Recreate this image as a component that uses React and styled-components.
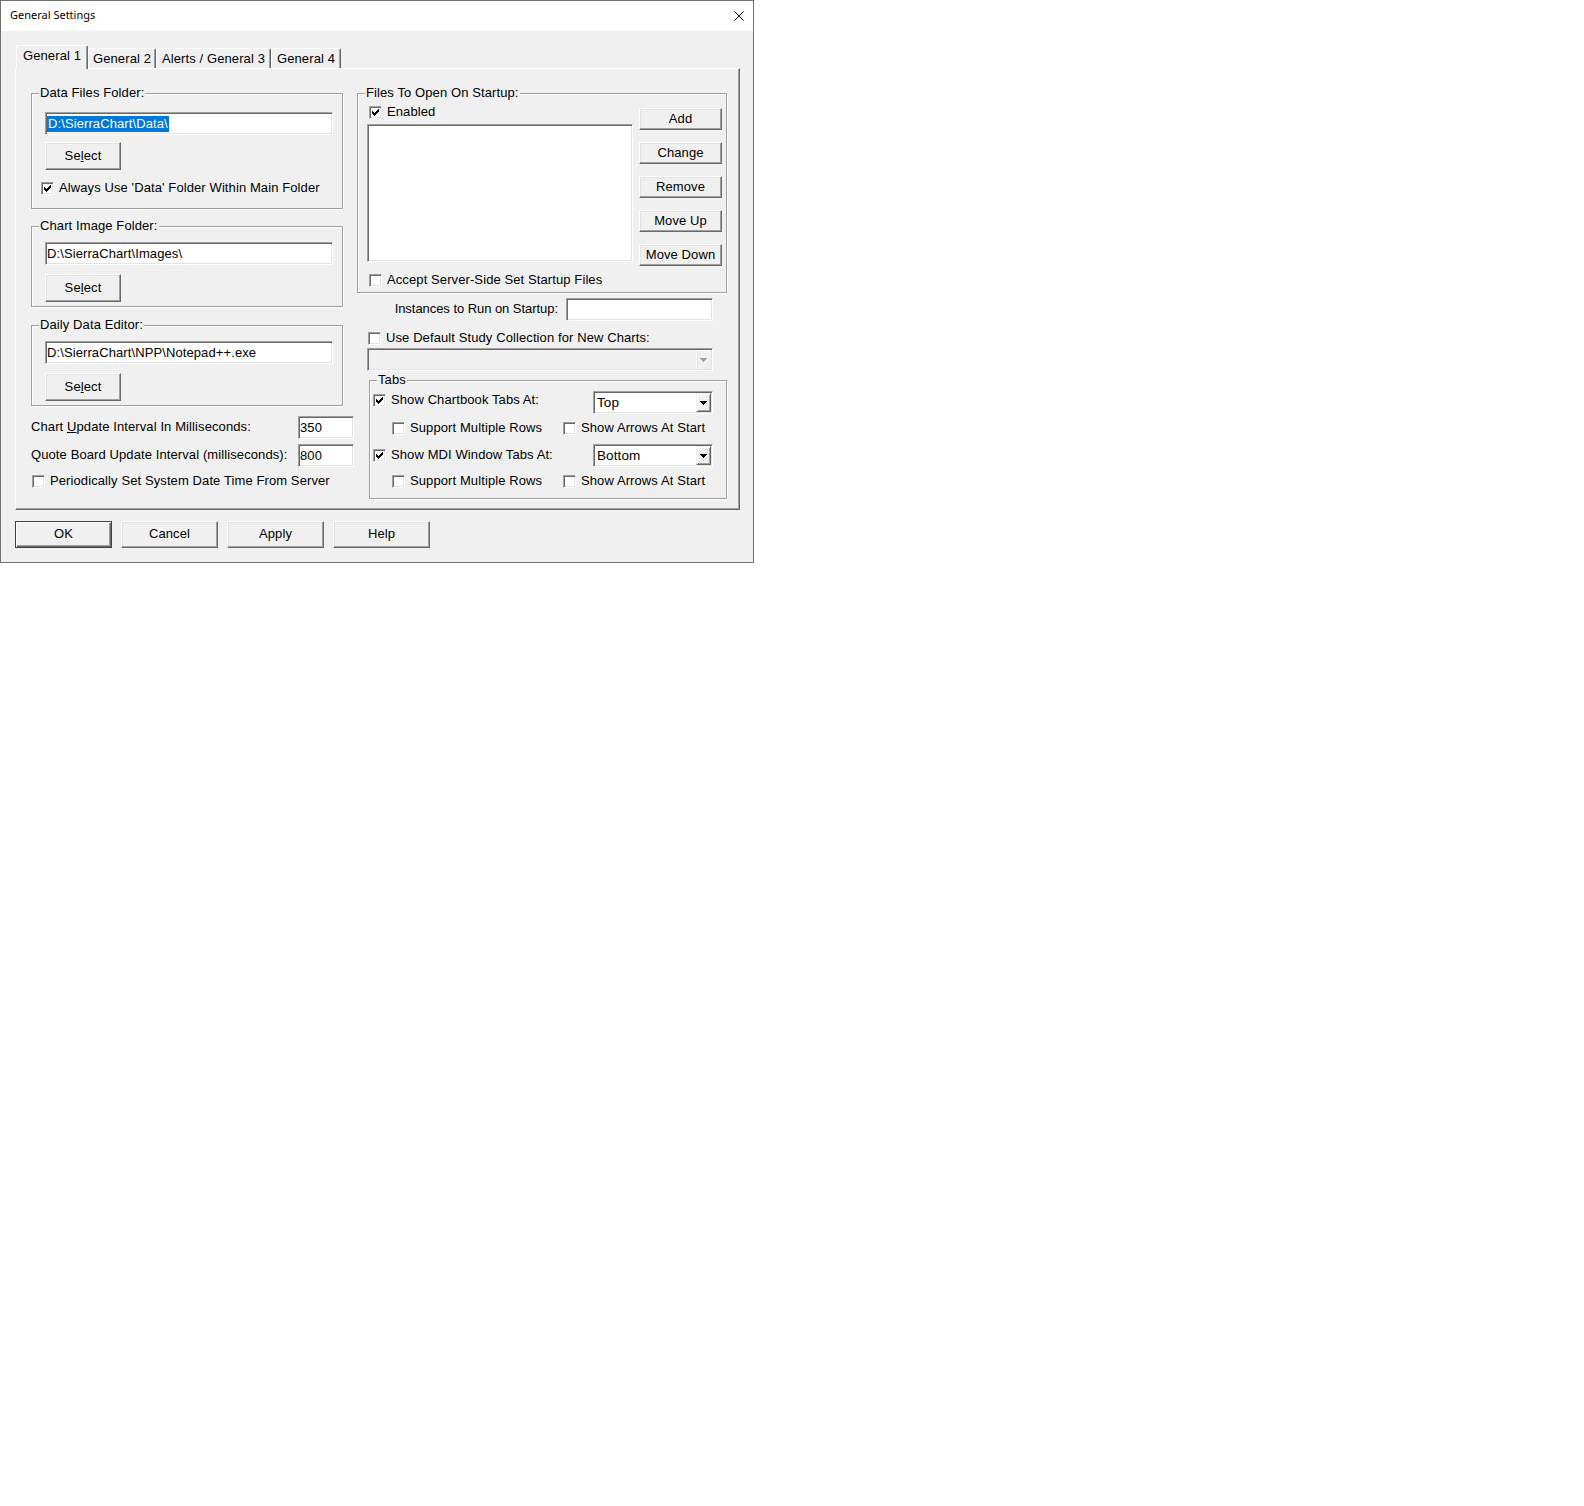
import React from 'react';
import styled, { createGlobalStyle } from 'styled-components';

const GlobalStyle = createGlobalStyle`
  html, body {
    margin: 0;
    padding: 0;
    background: #ffffff;
  }
  body {
    font-family: "Liberation Sans", Arial, sans-serif;
    font-size: 13px;
    letter-spacing: 0.1px;
    color: #000000;
  }
`;

const Window = styled.div`
  width: 754px;
  height: 563px;
  box-sizing: border-box;
  border: 1px solid #727272;
  background: #f0f0f0;
  display: flex;
  flex-direction: column;
`;

const TitleBar = styled.div`
  height: 30px;
  flex: none;
  box-sizing: border-box;
  background: #ffffff;
  display: flex;
  align-items: center;
  justify-content: space-between;
  padding: 0 9px 3px 9px;
  font-family: "Noto Sans", "Liberation Sans", sans-serif;
  font-size: 11px;
  letter-spacing: 0;
`;

const CloseButton = styled.span`
  display: flex;
  width: 10px;
  height: 10px;
  margin-top: 2px;
`;

const Body = styled.div`
  flex: 1;
  padding: 14px 13px 14px 14px;
  display: flex;
  flex-direction: column;
`;

const TabStrip = styled.div`
  height: 23px;
  display: flex;
  align-items: flex-end;
  padding-left: 1px;
`;

const Tab = styled.div`
  box-sizing: border-box;
  width: ${p => p.$w}px;
  height: ${p => (p.$active ? 24 : 20)}px;
  margin-bottom: ${p => (p.$active ? -1 : 0)}px;
  position: relative;
  z-index: ${p => (p.$active ? 2 : 1)};
  background: #f0f0f0;
  border-top: 1px solid #ffffff;
  border-left: 1px solid #ffffff;
  border-right: 1px solid #696969;
  box-shadow: inset -1px 0 0 #a0a0a0;
  border-radius: 2px 2px 0 0;
  display: flex;
  align-items: center;
  justify-content: center;
  padding-bottom: ${p => (p.$active ? 4 : 0)}px;
  white-space: nowrap;
`;

const Panel = styled.div`
  width: 725px;
  height: 442px;
  box-sizing: border-box;
  border-top: 1px solid #ffffff;
  border-left: 1px solid #ffffff;
  border-right: 1px solid #696969;
  border-bottom: 1px solid #696969;
  box-shadow: inset -1px -1px 0 #a0a0a0;
  padding: 24px 11px 0 15px;
  display: flex;
  gap: 14px;
`;

const Column = styled.div`
  width: ${p => p.$w}px;
  flex: none;
  display: flex;
  flex-direction: column;
`;

const GroupBox = styled.div`
  position: relative;
  box-sizing: border-box;
  width: ${p => (p.$w ? `${p.$w}px` : 'auto')};
  height: ${p => p.$h}px;
  margin-top: ${p => p.$mt || 0}px;
  margin-left: ${p => p.$ml || 0}px;
  padding: ${p => p.$pad};
  border: 1px solid #a0a0a0;
  box-shadow: 1px 1px 0 #ffffff, inset 1px 1px 0 #ffffff;
  display: flex;
  flex-direction: column;
  align-items: flex-start;
`;

const Caption = styled.span`
  position: absolute;
  top: -9px;
  left: 7px;
  padding: 0 1px;
  line-height: 15px;
  background: #f0f0f0;
  white-space: nowrap;
`;

const TextBox = styled.div`
  box-sizing: border-box;
  width: ${p => p.$w}px;
  height: 23px;
  flex: none;
  padding: 0 1px;
  background: #ffffff;
  border-top: 1px solid #a0a0a0;
  border-left: 1px solid #a0a0a0;
  border-bottom: 1px solid #ffffff;
  border-right: 1px solid #ffffff;
  box-shadow: inset 1px 1px 0 #696969, inset -1px -1px 0 #e3e3e3;
  display: flex;
  align-items: center;
  white-space: nowrap;
  overflow: hidden;
`;

const Selected = styled.span`
  background: #0078d7;
  color: #ffffff;
  line-height: 16px;
  padding: 0 1px;
`;

const ListBox = styled.div`
  box-sizing: border-box;
  width: ${p => p.$w}px;
  height: ${p => p.$h}px;
  margin-top: ${p => p.$mt || 0}px;
  background: #ffffff;
  border-top: 1px solid #a0a0a0;
  border-left: 1px solid #a0a0a0;
  border-bottom: 1px solid #ffffff;
  border-right: 1px solid #ffffff;
  box-shadow: inset 1px 1px 0 #696969, inset -1px -1px 0 #e3e3e3;
`;

const Button = styled.button`
  box-sizing: border-box;
  width: ${p => p.$w}px;
  height: ${p => p.$h}px;
  flex: none;
  margin: ${p => p.$mt || 0}px 0 0 0;
  padding: 0 0 2px 0;
  background: #f0f0f0;
  font: inherit;
  letter-spacing: inherit;
  color: #000000;
  border: 1px solid;
  border-color: ${p => (p.$default ? '#404040' : '#ffffff #696969 #696969 #ffffff')};
  box-shadow: ${p =>
    p.$default
      ? 'inset 1px 1px 0 #ffffff, inset -1px -1px 0 #696969, inset -2px -2px 0 #a0a0a0'
      : 'inset -1px -1px 0 #a0a0a0, inset 1px 1px 0 #e3e3e3'};
  display: flex;
  align-items: center;
  justify-content: center;
`;

const CheckRow = styled.label`
  display: flex;
  align-items: center;
  gap: 5px;
  height: 13px;
  flex: none;
  align-self: ${p => p.$align || 'auto'};
  margin-top: ${p => p.$mt || 0}px;
  margin-left: ${p => p.$ml || 0}px;
  white-space: nowrap;
`;

const CheckText = styled.span`
  padding-bottom: 2px;
`;

const Box = styled.span`
  box-sizing: border-box;
  width: 13px;
  height: 13px;
  flex: none;
  background: #ffffff;
  border: 1px solid;
  border-color: #a0a0a0 #ffffff #ffffff #a0a0a0;
  box-shadow: inset 1px 1px 0 #696969, inset -1px -1px 0 #e3e3e3;
  display: flex;
  align-items: center;
  justify-content: center;
`;

const FieldRow = styled.div`
  display: flex;
  align-items: center;
  justify-content: space-between;
  margin-top: ${p => p.$mt || 0}px;
  margin-right: -11px;
  white-space: nowrap;
`;

const FieldLabel = styled.span`
  padding-bottom: 2px;
`;

const InstancesRow = styled.div`
  display: flex;
  align-items: center;
  justify-content: flex-end;
  gap: 8px;
  margin-top: 5px;
  padding-right: 14px;
  white-space: nowrap;
  letter-spacing: -0.05px;
`;

const FilesInner = styled.div`
  display: flex;
  align-items: flex-start;
`;

const ListColumn = styled.div`
  display: flex;
  flex-direction: column;
`;

const SideButtons = styled.div`
  display: flex;
  flex-direction: column;
  gap: 12px;
  margin: 2px 0 0 6px;
`;

const Combo = styled.div`
  box-sizing: border-box;
  width: ${p => p.$w}px;
  height: 23px;
  flex: none;
  margin-top: ${p => p.$mt || 0}px;
  margin-left: ${p => p.$ml || 0}px;
  padding: 1px;
  background: ${p => (p.$disabled ? '#f0f0f0' : '#ffffff')};
  border-top: 1px solid #a0a0a0;
  border-left: 1px solid #a0a0a0;
  border-bottom: 1px solid #ffffff;
  border-right: 1px solid #ffffff;
  box-shadow: inset 1px 1px 0 #696969, inset -1px -1px 0 #e3e3e3;
  display: flex;
  align-items: stretch;
`;

const ComboValue = styled.span`
  flex: 1;
  display: flex;
  align-items: center;
  padding-left: 2px;
  font-size: 13.5px;
`;

const ArrowButton = styled.span`
  box-sizing: border-box;
  width: 15px;
  flex: none;
  background: #f0f0f0;
  border: 1px solid;
  border-color: ${p => (p.$disabled ? '#ffffff #f0f0f0 #f0f0f0 #ffffff' : '#f0f0f0 #696969 #696969 #f0f0f0')};
  box-shadow: ${p => (p.$disabled ? 'inset 1px 0 0 #e3e3e3' : 'inset 1px 1px 0 #ffffff, inset -1px -1px 0 #a0a0a0')};
  display: flex;
  align-items: center;
  justify-content: center;
`;

const TabRow = styled.div`
  align-self: stretch;
  height: 23px;
  display: flex;
  align-items: center;
  justify-content: space-between;
  margin-top: ${p => p.$mt || 0}px;
`;

const SubRow = styled.div`
  display: flex;
  margin-top: ${p => p.$mt || 0}px;
  padding-left: 19px;
`;

const OptionCell = styled.div`
  width: ${p => p.$w}px;
  flex: none;
`;

const Footer = styled.div`
  display: flex;
  gap: 9px;
  margin-top: 11px;
`;

const CheckMark = () => (
  <svg width="7" height="7" viewBox="0 0 7 7" shapeRendering="crispEdges">
    <path
      fill="#000"
      d="M6 0h1v1h-1z M5 1h2v1h-2z M0 2h1v1h-1z M4 2h3v1h-3z M0 3h2v1h-2z M3 3h3v1h-3z M0 4h5v1h-5z M1 5h3v1h-3z M2 6h1v1h-1z"
    />
  </svg>
);

const DownArrow = ({ color = '#000' }) => (
  <svg width="7" height="4" viewBox="0 0 7 4" shapeRendering="crispEdges">
    <path fill={color} d="M0 0h7v1H0z M1 1h5v1H1z M2 2h3v1H2z M3 3h1v1H3z" />
  </svg>
);

const CheckBox = ({ checked, children, ...rest }) => (
  <CheckRow {...rest}>
    <Box>{checked && <CheckMark />}</Box>
    {children && <CheckText>{children}</CheckText>}
  </CheckRow>
);

const DropDown = ({ value, disabled, ...rest }) => (
  <Combo $disabled={disabled} {...rest}>
    <ComboValue>{value}</ComboValue>
    <ArrowButton $disabled={disabled}>
      <DownArrow color={disabled ? '#a0a0a0' : '#000'} />
    </ArrowButton>
  </Combo>
);

const SelectLabel = () => (
  <span>
    Se<u>l</u>ect
  </span>
);

const tabs = [
  { label: 'General 1', w: 72 },
  { label: 'General 2', w: 68 },
  { label: 'Alerts / General 3', w: 115 },
  { label: 'General 4', w: 70 },
];

const fileButtons = ['Add', 'Change', 'Remove', 'Move Up', 'Move Down'];

const footerButtons = ['OK', 'Cancel', 'Apply', 'Help'];

// tab placement options: chartbook tabs and MDI window tabs share the same layout
const tabOptions = [
  { label: 'Show Chartbook Tabs At:', value: 'Top', mt: 0, checkMt: 3, subMt: 8 },
  { label: 'Show MDI Window Tabs At:', value: 'Bottom', mt: 9, checkMt: 5, subMt: 8 },
];

export default function App() {
  return (
    <>
      <GlobalStyle />
      <Window>
        <TitleBar>
          <span>General Settings</span>
          <CloseButton>
            <svg width="10" height="10" viewBox="0 0 10 10">
              <path d="M0.5 0.5L9.5 9.5M9.5 0.5L0.5 9.5" stroke="#111" strokeWidth="1" />
            </svg>
          </CloseButton>
        </TitleBar>

        <Body>
          <TabStrip>
            {tabs.map((t, i) => (
              <Tab key={t.label} $w={t.w} $active={i === 0}>
                {t.label}
              </Tab>
            ))}
          </TabStrip>

          <Panel>
            <Column $w={312}>
              <GroupBox $h={116} $pad="18px 9px 13px 13px">
                <Caption>Data Files Folder:</Caption>
                <TextBox $w={288}>
                  <Selected>D:\SierraChart\Data\</Selected>
                </TextBox>
                <Button $w={76} $h={28} $mt={7}>
                  <SelectLabel />
                </Button>
                <CheckBox checked $mt={12} $ml={-4}>
                  Always Use 'Data' Folder Within Main Folder
                </CheckBox>
              </GroupBox>

              <GroupBox $h={81} $mt={17} $pad="15px 9px 4px 13px">
                <Caption>Chart Image Folder:</Caption>
                <TextBox $w={288}>D:\SierraChart\Images\</TextBox>
                <Button $w={76} $h={28} $mt={9}>
                  <SelectLabel />
                </Button>
              </GroupBox>

              <GroupBox $h={81} $mt={18} $pad="15px 9px 4px 13px">
                <Caption>Daily Data Editor:</Caption>
                <TextBox $w={288}>D:\SierraChart\NPP\Notepad++.exe</TextBox>
                <Button $w={76} $h={28} $mt={9}>
                  <SelectLabel />
                </Button>
              </GroupBox>

              <FieldRow $mt={10}>
                <FieldLabel>
                  Chart <u>U</u>pdate Interval In Milliseconds:
                </FieldLabel>
                <TextBox $w={56}>350</TextBox>
              </FieldRow>
              <FieldRow $mt={5}>
                <FieldLabel>Quote Board Update Interval (milliseconds):</FieldLabel>
                <TextBox $w={56}>800</TextBox>
              </FieldRow>
              <CheckBox $mt={8} $ml={1}>
                Periodically Set System Date Time From Server
              </CheckBox>
            </Column>

            <Column $w={370}>
              <GroupBox $h={200} $pad="12px 4px 5px 9px">
                <Caption>Files To Open On Startup:</Caption>
                <FilesInner>
                  <ListColumn>
                    <CheckBox checked $ml={2}>
                      Enabled
                    </CheckBox>
                    <ListBox $w={266} $h={138} $mt={5} />
                    <CheckBox $mt={12} $ml={2}>
                      Accept Server-Side Set Startup Files
                    </CheckBox>
                  </ListColumn>
                  <SideButtons>
                    {fileButtons.map(label => (
                      <Button key={label} $w={83} $h={22}>
                        {label}
                      </Button>
                    ))}
                  </SideButtons>
                </FilesInner>
              </GroupBox>

              <InstancesRow>
                <FieldLabel>Instances to Run on Startup:</FieldLabel>
                <TextBox $w={147} />
              </InstancesRow>

              <CheckBox $mt={11} $ml={11}>
                Use Default Study Collection for New Charts:
              </CheckBox>
              <DropDown disabled value="" $w={346} $mt={3} $ml={10} />

              <GroupBox $w={358} $h={119} $mt={9} $ml={12} $pad="10px 13px 9px 3px">
                <Caption>Tabs</Caption>
                {tabOptions.map(opt => (
                  <React.Fragment key={opt.label}>
                    <TabRow $mt={opt.mt}>
                      <CheckBox checked $align="flex-start" $mt={opt.checkMt}>
                        {opt.label}
                      </CheckBox>
                      <DropDown value={opt.value} $w={120} />
                    </TabRow>
                    <SubRow $mt={opt.subMt}>
                      <OptionCell $w={171}>
                        <CheckBox>Support Multiple Rows</CheckBox>
                      </OptionCell>
                      <CheckBox>Show Arrows At Start</CheckBox>
                    </SubRow>
                  </React.Fragment>
                ))}
              </GroupBox>
            </Column>
          </Panel>

          <Footer>
            {footerButtons.map((label, i) => (
              <Button key={label} $w={97} $h={27} $default={i === 0}>
                {label}
              </Button>
            ))}
          </Footer>
        </Body>
      </Window>
    </>
  );
}
